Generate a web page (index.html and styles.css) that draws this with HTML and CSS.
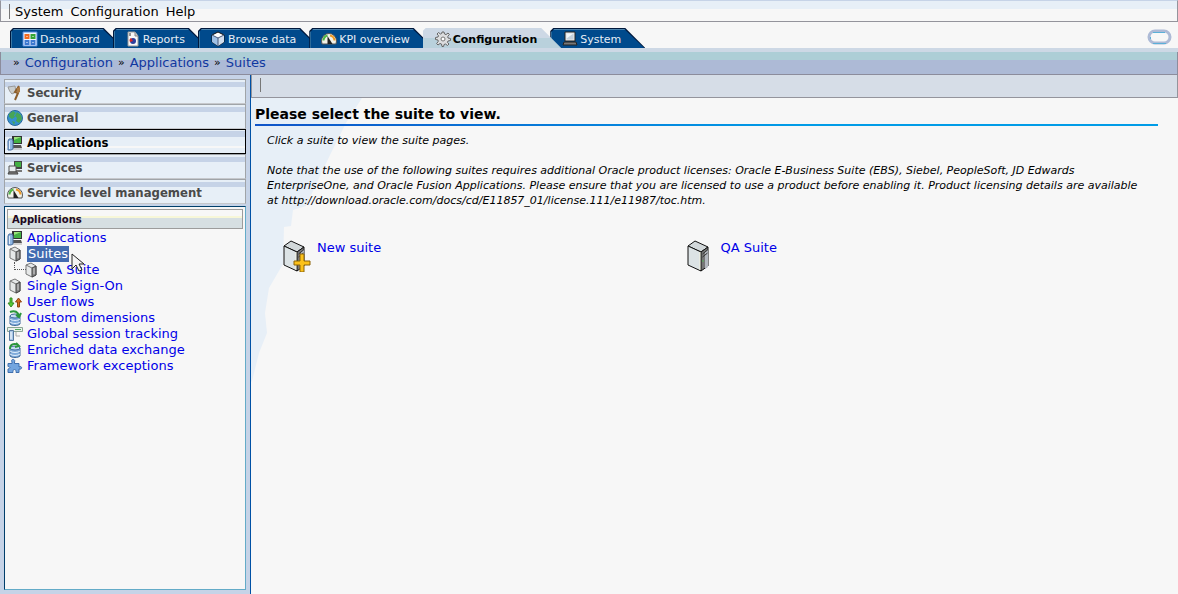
FILE: index.html
```html
<!DOCTYPE html>
<html lang="en">
<head>
<meta charset="utf-8">
<title>Configuration - Suites</title>
<link rel="stylesheet" href="styles.css">
</head>
<body>
<svg class="defs" aria-hidden="true">
  <symbol id="host" viewBox="0 0 16 16">
    <path d="M5 1h10v8H5z" fill="#333"/><path d="M7 2h7v6H7z" fill="#43b043"/><path d="M7 5l7-3H7z" fill="#9be37b"/>
    <path d="M6 10h8l1 3H6z" fill="#555"/><path d="M6 14h9" stroke="#aaa"/>
    <path d="M1 6l1-2h3l1 2v8l-2 1H1z" fill="#8fb6e2" stroke="#4b6f9f"/><path d="M2.500 6v8" stroke="#dceafa"/>
  </symbol>
  <symbol id="box" viewBox="0 0 16 16">
    <path d="M3 3l5-2 5 3v9l-4 2-6-3z" fill="#e6e8e8" stroke="#777"/><path d="M9 6l4-2v9l-4 2z" fill="#888" stroke="#444"/><path d="M3 3l6 3" stroke="#777"/><path d="M11 6v6" stroke="#ccc"/>
  </symbol>
  <symbol id="tower" viewBox="0 0 28 32">
    <path d="M1 6l7-5 13 6-7 5z" fill="#d2d8da" stroke="#111"/><path d="M1 6l13 6v19L1 25z" fill="#dce3e5" stroke="#111"/>
    <path d="M14 12l7-5v19l-7 5z" fill="#777" stroke="#111"/><path d="M18 12v17l3-2V10z" fill="#b4b8bf"/><path d="M13 12v18" stroke="#f4f3df"/><path d="M15.500 14l5-4M15.500 17l5-4" stroke="#333"/><path d="M16 20v2" stroke="#58b458"/>
  </symbol>
  <symbol id="db" viewBox="0 0 16 16">
    <path d="M3 6v8c2 2 8 2 10 0V6z" fill="#7fabdb" stroke="#426b99"/><ellipse cx="8" cy="6" rx="5" ry="2" fill="#c5dcf3" stroke="#426b99"/><path d="M3 9c2 2 8 2 10 0M3 12c2 2 8 2 10 0" fill="none" stroke="#e2effb"/>
  </symbol>
  <symbol id="gauge" viewBox="0 0 16 16">
    <path d="M1 13l-.5-3a7.500 7.500 0 0 1 15 0l-.5 3z" fill="#f2f2e8" stroke="#555"/><path d="M2.500 9.500a5.500 5.500 0 0 1 4-5" fill="none" stroke="#51b848" stroke-width="2"/><path d="M9 4.500a5.500 5.500 0 0 1 4.500 5" fill="none" stroke="#f09a24" stroke-width="2"/><path d="M6.500 5l5 8H6.500z" fill="#222"/>
  </symbol>
</svg>

<nav class="menubar" aria-label="Menu">
  <button>System</button><button>Configuration</button><button>Help</button>
</nav>

<div class="tabstrip">
  <nav class="tabs" aria-label="Sections">
    <button class="tab"><svg class="icon" viewBox="0 0 16 16"><path d="M1 1h14v14H1z" fill="#edf4ff" stroke="#4d87dc"/><g fill="#fff" stroke-width="2"><path d="M3.500 4h3v3h-3z" stroke="#f06a20"/><path d="M9.500 4h3v3h-3z" stroke="#35a536"/><path d="M3.500 10h3v3h-3zM9.500 10h3v3h-3z" stroke="#3c78d0"/></g></svg>Dashboard</button>
    <button class="tab"><svg class="icon" viewBox="0 0 16 16"><path d="M3 1h7l3 4v10H3z" fill="#f8f8f8" stroke="#999"/><path d="M10 1v4h3" fill="#ccc" stroke="#888"/><circle cx="8" cy="10" r="3" fill="#2b3f9d"/><path d="M8 10L6 7a3 3 0 0 0-1 4z" fill="#d82828"/><path d="M5 2v3" stroke="#333"/></svg>Reports</button>
    <button class="tab"><svg class="icon" viewBox="0 0 16 16"><path d="M2 4l6-3 6 3v7l-6 4-6-4z" fill="#fff" stroke="#111"/><path d="M2 4l6 3v8l-6-4z" fill="#9fc1e6"/><path d="M8 7l6-3v7l-6 4z" fill="#cfdded"/><path d="M2 4l6 3 6-3M8 7v8" fill="none" stroke="#45597a"/></svg>Browse data</button>
    <button class="tab"><svg class="icon"><use href="#gauge"/></svg>KPI overview</button>
    <button class="tab active" aria-current="page"><svg class="icon" viewBox="0 0 16 16"><path d="M7 1h2l.5 2 1.500.6L13 2l1.400 1.400L12.800 5.500 13 7l2.500.5v2L13 10l-.6 1.300L14 13l-1.500 1.500-2-1.500-1.500.5L8.600 15.500H7L6.500 13 5 12.500 3 14l-1.400-1.400L3.200 10.500 3 9 .5 8.500v-2L3 6l.5-1.300L2 3l1.500-1.500L5.500 3 6.700 2.500z" fill="#dcdddf" stroke="#666"/><circle cx="8" cy="8" r="2" fill="#fff" stroke="#777"/></svg>Configuration</button>
    <button class="tab"><svg class="icon" viewBox="0 0 16 16"><path d="M3 1h10v9H3z" fill="#e9e9e9" stroke="#222"/><path d="M4.500 2.500h7v6h-7z" fill="#c3d0dc"/><path d="M4.500 2.500h7l-7 5z" fill="#f2f6f9"/><path d="M2 11h12l1 3H1z" fill="#777" stroke="#222"/></svg>System</button>
  </nav>
  <svg class="pill" viewBox="0 0 26 16"><rect x="2" y="2" width="21" height="12" rx="6" fill="#f7f7f7" stroke="#adbad6" stroke-width="3"/><path d="M6 3.500h12M6 14.500h13M3.500 8v2" stroke="#5ab0d8"/></svg>
</div>

<nav class="crumbs" aria-label="Breadcrumb">
  <span>»</span><a href="#">Configuration</a><span>»</span><a href="#">Applications</a><span>»</span><a href="#">Suites</a>
</nav>

<div class="workspace">
  <aside class="sidebar">
    <div class="sections">
      <button><svg class="icon" viewBox="0 0 16 16"><path d="M1 2l7-1 1 6-4 2C3 7 2 5 1 2z" fill="#c9cdcd" stroke="#999"/><path d="M12 1L8 7l3 1-3 7" fill="none" stroke="#8b5e2c" stroke-width="2"/><path d="M10 3l3-1v5l-3 1z" fill="#ad7b43"/></svg>Security</button>
      <button><svg class="icon" viewBox="0 0 16 16"><circle cx="8" cy="8" r="7.500" fill="#3590cf" stroke="#28699a"/><path d="M2 4l4-3 3 2-2 2 1 2-3 2-3-2zM10 2l4 3 1 4-3 4-3-2 1-3-2-2zM5 11l3 1-1 3z" fill="#46a557"/></svg>General</button>
      <button class="current"><svg class="icon"><use href="#host"/></svg>Applications</button>
      <button><svg class="icon" viewBox="0 0 16 16"><path d="M7 1h8v8H7z" fill="#444"/><path d="M8 2h6v5H8z" fill="#43b043"/><path d="M9 10h6v2H9z" fill="#777"/><path d="M2 6h7v6H2z" fill="#e8ecef" stroke="#555"/><path d="M1 14h10l-1-2H2z" fill="#888" stroke="#444"/></svg>Services</button>
      <button><svg class="icon"><use href="#gauge"/></svg>Service level management</button>
    </div>
    <section class="panel">
      <h2>Applications</h2>
      <ul class="tree">
        <li><svg class="icon"><use href="#host"/></svg><a href="#">Applications</a></li>
        <li><svg class="icon"><use href="#box"/></svg><a href="#" class="selected">Suites</a>
          <svg class="cursor" viewBox="0 0 14 20"><path d="M1 1v15l4-4 3 6 3-1-3-6h5z" fill="#f4f4f4" stroke="#222"/></svg></li>
        <li class="child"><span class="branch"></span><svg class="icon"><use href="#box"/></svg><a href="#">QA Suite</a></li>
        <li><svg class="icon"><use href="#box"/></svg><a href="#">Single Sign-On</a></li>
        <li><svg class="icon" viewBox="0 0 16 16"><path d="M3 4h2v5h2l-3 4-3-4h2z" fill="#58c936" stroke="#358b24"/><path d="M10.500 13V8H8.500l3-4 3 4h-2v5z" fill="#d66b1e" stroke="#8f4714"/></svg><a href="#">User flows</a></li>
        <li><svg class="icon" viewBox="0 0 16 16"><use href="#db"/><path d="M3 2c5-2 8 0 9 4M9 5l3 2 2-4" fill="none" stroke="#2b963b" stroke-width="2"/></svg><a href="#">Custom dimensions</a></li>
        <li><svg class="icon" viewBox="0 0 16 16"><path d="M.5 1.500h15v4H.5z" fill="#e9f0eb" stroke="#8aa494"/><path d="M8 3.500h6" stroke="#52ab60"/><path d="M9 6v4h4" fill="none" stroke="#aaa"/><path d="M2.500 4.500h4v10h-4z" fill="#a8c6e8" stroke="#56799f"/><path d="M4 6v7" stroke="#fff"/></svg><a href="#">Global session tracking</a></li>
        <li><svg class="icon" viewBox="0 0 16 16"><use href="#db"/><path d="M3 7c0-5 4-6 8-4M9 1l3 3-4 1" fill="none" stroke="#2b963b" stroke-width="2"/></svg><a href="#">Enriched data exchange</a></li>
        <li><svg class="icon" viewBox="0 0 16 16"><path d="M1 5.500h4V4c-2-3.500 4-3.500 2.500 0v1.500H12V9c3-2 4 3 0 2v3.500H9c1-4-4-4-3 0H1V11c2.500-.5 2.500-2.500 0-2.500z" fill="#73a5df" stroke="#3f6fae"/></svg><a href="#">Framework exceptions</a></li>
      </ul>
    </section>
  </aside>

  <main class="content">
    <div class="toolbar"></div>
    <div class="page">
      <div class="wash"></div>
      <h1>Please select the suite to view.</h1>
      <div class="intro">
        <p>Click a suite to view the suite pages.</p>
        <p>Note that the use of the following suites requires additional Oracle product licenses: Oracle E-Business Suite (EBS), Siebel, PeopleSoft, JD Edwards EnterpriseOne, and Oracle Fusion Applications. Please ensure that you are licensed to use a product before enabling it. Product licensing details are available at http://download.oracle.com/docs/cd/E11857_01/license.111/e11987/toc.htm.</p>
      </div>
      <div class="suites">
        <a href="#"><svg class="tower" viewBox="0 0 28 32"><use href="#tower"/><path d="M17 14h4v7h6v4h-6v7h-4v-7h-6v-4h6z" fill="#fcc21a" stroke="#8d6508"/></svg>New suite</a>
        <a href="#"><svg class="tower" viewBox="0 0 28 32"><use href="#tower"/></svg>QA Suite</a>
      </div>
    </div>
  </main>
</div>
</body>
</html>
```
FILE: styles.css
```css
* { box-sizing: border-box; }
body {
  margin: 0;
  min-height: 100vh;
  display: flex;
  flex-direction: column;
  background: #f7f7f7;
  color: #000;
  font: 13px/16px Verdana, "DejaVu Sans", sans-serif;
}
button { margin: 0; border: 0; padding: 0; background: none; color: inherit; font: inherit; white-space: nowrap; }
a { color: #0000e8; text-decoration: none; white-space: nowrap; }
.defs { position: absolute; width: 0; height: 0; }
.icon { width: 16px; height: 16px; flex: none; }

.menubar {
  display: flex;
  gap: 7px;
  height: 22px;
  padding: 3px 8px 1px;
  border: 1px solid #94949c;
  border-top-color: #c6d3e7;
  background: linear-gradient(#e7eff7 8px, #f7f7f7 8px);
}
.menubar::before { content: ""; width: 1px; height: 15px; margin-right: -2px; background: #777; }

.tabstrip {
  display: flex;
  justify-content: space-between;
  height: 30px;
  padding: 6px 5px 0 10px;
  border-bottom: 4px solid #cdd8e5;
}
.tabs { display: flex; }
.tab {
  position: relative;
  isolation: isolate;
  display: flex;
  align-items: center;
  gap: 2px;
  height: 20px;
  padding: 4px 24px 0 12px;
  margin-right: -11px;
  background: #00183c;
  color: #e6edf5;
  font-size: 11px;
  clip-path: polygon(0 3px, 3px 0, calc(100% - 20px) 0, 100% 100%, 0 100%);
}
.tab::before {
  content: "";
  position: absolute;
  inset: 1px 1px 0;
  z-index: -1;
  background: #004a8c;
  border-top: 1px solid #4f86ae;
  border-left: 1px solid #3a78a4;
  clip-path: polygon(0 3px, 3px 0, calc(100% - 20px) 0, 100% 100%, 0 100%);
}
.tab .icon { margin-top: -3px; }
.tab.active { z-index: 2; background: linear-gradient(#cdd8e5 10px, #b9d1dc 10px); color: #000; font-weight: bold; }
.tab.active::before { display: none; }
.pill { width: 26px; height: 16px; margin-top: 1px; }

.crumbs {
  display: flex;
  gap: 5px;
  height: 23px;
  padding: 3px 12px;
  border: 1px solid #8c8c9c;
  border-top: 0;
  background: linear-gradient(#adced6 8px, #adbad6 8px);
}
.crumbs a { color: #1038a0; }
.crumbs span { font-size: 11px; }

.workspace { flex: 1; display: flex; }
.sidebar {
  width: 251px;
  flex: none;
  display: flex;
  flex-direction: column;
  padding: 4px;
  border-right: 1px solid #0051a5;
  background: #c6d3e7;
}
.sections { display: flex; flex-direction: column; margin-bottom: 2px; }
.sections button {
  display: flex;
  align-items: center;
  gap: 4px;
  height: 25px;
  padding: 2px 2px 0;
  border: 1px solid #a0a4a8;
  border-bottom-color: #c6c8cc;
  background: linear-gradient(#e7eff7 2px, #c6d3e7 2px 7px, #e7eff7 7px);
  color: #4a4a4a;
  font-family: Tahoma, "DejaVu Sans Condensed", "DejaVu Sans", sans-serif;
  font-weight: bold;
}
.sections .current {
  border-color: #000;
  color: #000;
  background: linear-gradient(#e7eff7 1px, #c6d3e7 1px 7px, #e7eff7 7px 16px, #f7f7f7 16px 18px, #e7eff7 18px);
}
.panel {
  flex: 1;
  padding: 2px;
  border: 1px solid;
  border-color: #003f6b #63abc8 #63abc8 #003f6b;
  background: #f7f7f7;
}
.panel h2 {
  height: 20px;
  margin: 0;
  padding: 2px 4px;
  border: 1px solid #9c9c9c;
  background: linear-gradient(#f7f7f7 6px, #f7f7d8 6px 8px, #d6dfe2 8px);
  color: #210821;
  font-size: 10px;
}
.tree { list-style: none; margin: 1px 0 0; padding: 0; }
.tree li { position: relative; display: flex; gap: 4px; height: 16px; }
.tree .selected { padding: 0 1px; background: #426bb0; color: #fff; }
.tree .branch { width: 12px; height: 8px; margin-left: 7px; margin-right: -7px; border-left: 1px dotted #555; border-bottom: 1px dotted #555; }
.cursor { position: absolute; left: 64px; top: 7px; width: 14px; height: 20px; z-index: 3; }

.content { flex: 1; min-width: 0; display: flex; flex-direction: column; }
.toolbar { height: 23px; padding: 3px 8px; border: 1px solid #94949c; border-top: 0; background: #d6dde7; }
.toolbar::before { content: ""; display: block; width: 1px; height: 14px; background: #777; }
.page { position: relative; flex: 1; padding: 7px 12px 0 4px; isolation: isolate; }
.wash {
  position: absolute;
  top: 0;
  left: 0;
  z-index: -1;
  width: 112px;
  height: 284px;
  background: #e7eff7;
  clip-path: polygon(0 0, 111px 0, 95px 25px, 80px 55px, 68px 80px, 55px 108px, 42px 112px, 40px 128px, 33px 129px, 32px 166px, 18px 190px, 14px 215px, 16px 235px, 8px 255px, 1px 283px, 0 284px);
}
h1 {
  margin: 0 8px 0 0;
  padding-bottom: 1px;
  border-bottom: 2px solid;
  border-image: linear-gradient(90deg, #1054c8, #009ce7 60%) 1;
  font-size: 14px;
  line-height: 18px;
}
.intro { padding: 7px 20px 0 12px; font-size: 11px; line-height: 15px; font-style: italic; }
.intro p { margin: 0 0 15px; }
.suites { display: grid; grid-template-columns: 1fr 1fr; padding: 17px 76px 0 28px; }
.suites a { display: flex; gap: 6px; }
.tower { width: 28px; height: 32px; }
```
